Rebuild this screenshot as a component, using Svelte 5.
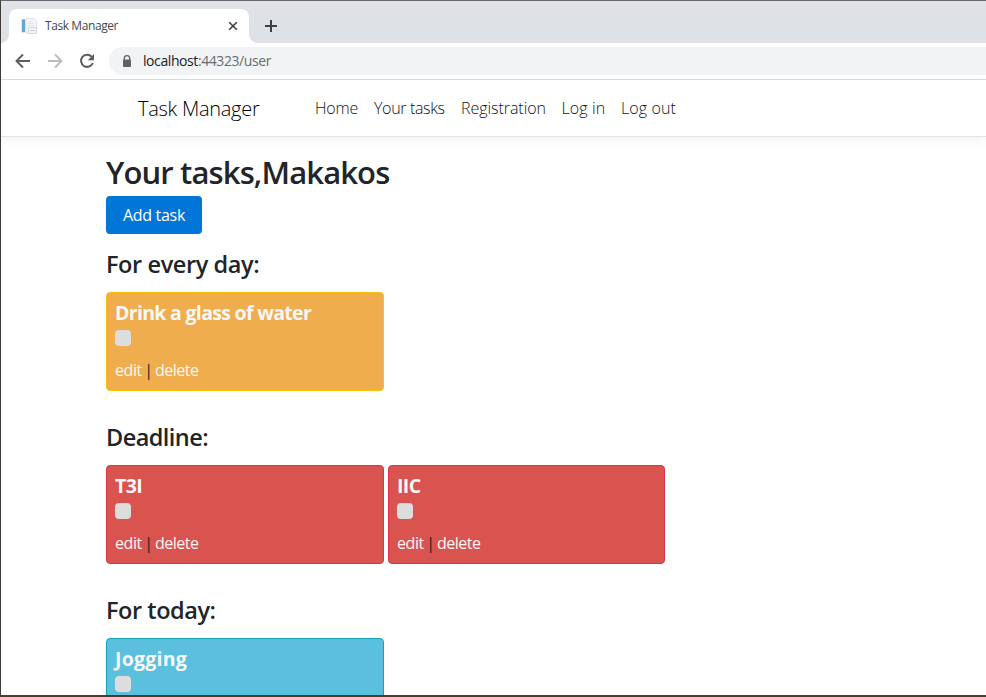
<script>
  const links = [
    { label: 'Home', cls: 'home' },
    { label: 'Your tasks', cls: 'tasks' },
    { label: 'Registration', cls: 'registration' },
    { label: 'Log in', cls: 'login' },
    { label: 'Log out', cls: 'logout' }
  ];
  const sections = [
    { title: 'For every day:', cls: 'daily', kind: 'warning', actions: true, tasks: ['Drink a glass of water'] },
    { title: 'Deadline:', cls: 'deadline', kind: 'danger', actions: true, tasks: ['T3I', 'IIC'] },
    { title: 'For today:', cls: 'today', kind: 'info', actions: false, tasks: ['Jogging'] }
  ];
</script>

<div class="window">
  <div class="strip">
    <div class="tab">
      <svg class="favicon" width="16" height="16" viewBox="0 0 16 16">
        <rect x="0" y="1" width="12" height="14" fill="#e3e9ee" />
        <rect x="1" y="1.500" width="3" height="12.500" fill="#62a8d4" />
        <path d="M5 .5h8l2.500 2.500v12H5z" fill="#f6f7f8" stroke="#e0e3e6" />
        <path d="M7 3.500h4M7 5.500h6M7 7.500h6" stroke="#dfe2e6" />
        <path d="M7.500 9.500h8v6h-8z" fill="#f3f4f8" stroke="#d3d5de" />
        <path d="M9 12.500h5" stroke="#c8ced8" />
      </svg>
      <span class="tab-title">Task Manager</span>
      <svg class="close" width="10" height="10" viewBox="0 0 10 10"><path d="M1.200 1.200l7.600 7.600M8.800 1.200l-7.600 7.600" stroke="#3c4043" stroke-width="1.600" /></svg>
    </div>
    <svg class="plus" width="12" height="12" viewBox="0 0 12 12"><path d="M6 0v12M0 6h12" stroke="#3c4043" stroke-width="2" /></svg>
  </div>

  <div class="toolbar">
    <svg width="24" height="24" viewBox="0 0 24 24" fill="none" stroke="#5a5d61" stroke-width="1.900"><path d="M19 12H6M12 5.500L5.500 12l6.500 6.500" /></svg>
    <svg width="24" height="24" viewBox="0 0 24 24" fill="none" stroke="#babcbe" stroke-width="1.900"><path d="M5 12h13M12 5.500l6.500 6.500-6.500 6.500" /></svg>
    <svg width="24" height="24" viewBox="0 0 24 24"><path d="M16.600 7.600A6.100 6.100 0 1 0 17.800 14" fill="none" stroke="#5a5d61" stroke-width="2" /><path d="M19 5v6.200h-6.200z" fill="#5a5d61" /></svg>
    <div class="address">
      <svg width="10" height="13" viewBox="0 0 10 13"><path d="M2.300 5V3.400a2.700 2.700 0 0 1 5.400 0V5" fill="none" stroke="#5f6368" stroke-width="1.300" /><rect x="1" y="4.500" width="8" height="7.500" rx=".9" fill="#5f6368" /></svg>
      <span class="url"><b>localhost</b>:44323/user</span>
    </div>
  </div>

  <nav>
    <span class="brand">Task Manager</span>
    {#each links as link}
      <span class="link {link.cls}">{link.label}</span>
    {/each}
  </nav>

  <main>
    <h1>Your tasks,Makakos</h1>
    <button>Add task</button>
    {#each sections as section}
      <section>
        <h3 class={section.cls}>{section.title}</h3>
        <div class="cards">
          {#each section.tasks as task}
            <article class={section.kind}>
              <h5>{task}</h5>
              <span class="check"></span>
              {#if section.actions}
                <p><span class="edit">edit</span><i>|</i><span class="delete">delete</span></p>
              {/if}
            </article>
          {/each}
        </div>
      </section>
    {/each}
  </main>
</div>

<style>
  :global(body) {
    margin: 0;
    overflow: hidden;
  }
  .window {
    box-sizing: border-box;
    width: 986px;
    height: 697px;
    overflow: hidden;
    display: flex;
    flex-direction: column;
    background: #fff;
    border-top: 1px solid #69696c;
    border-left: 1px solid #3f3b38;
    border-bottom: 2px solid #45402a;
    font-family: 'Open Sans', 'Noto Sans', sans-serif;
    color: #212529;
    white-space: nowrap;
  }
  .strip {
    flex: none;
    height: 42px;
    background: #dee1e6;
    display: flex;
    align-items: flex-end;
  }
  .tab {
    position: relative;
    box-sizing: border-box;
    width: 240px;
    height: 34px;
    margin-left: 8px;
    padding: 0 11px 0 12px;
    border-radius: 8px 8px 0 0;
    background: #fff;
    display: flex;
    align-items: center;
  }
  .tab::before,
  .tab::after {
    content: '';
    position: absolute;
    bottom: 0;
    width: 8px;
    height: 8px;
  }
  .tab::before {
    left: -8px;
    background: radial-gradient(circle at 0 0, #dee1e6 7.500px, #fff 8px);
  }
  .tab::after {
    right: -8px;
    background: radial-gradient(circle at 100% 0, #dee1e6 7.500px, #fff 8px);
  }
  .tab-title {
    margin-left: 8px;
    padding-bottom: 1px;
    font-size: 12px;
    letter-spacing: -0.420px;
    color: #45494d;
    flex: 1;
  }
  .plus {
    margin: 0 0 11px 16px;
  }
  .toolbar {
    flex: none;
    height: 36px;
    padding-left: 10px;
    border-bottom: 1px solid #dadce0;
    display: flex;
    align-items: center;
    gap: 8px;
  }
  .address {
    flex: 1;
    height: 28px;
    margin-left: 2px;
    padding-left: 13px;
    border-radius: 14px 0 0 14px;
    background: #f1f3f4;
    display: flex;
    align-items: center;
    gap: 11px;
  }
  .url {
    padding-bottom: 1px;
    font-size: 14px;
    letter-spacing: -0.420px;
    color: #676b70;
  }
  .url b {
    font-weight: 400;
    color: #202124;
  }
  nav {
    flex: none;
    box-sizing: border-box;
    height: 57px;
    padding-left: 137px;
    border-bottom: 1px solid #dee2e6;
    box-shadow: 0 4px 12px rgba(0, 0, 0, 0.050);
    display: flex;
    align-items: center;
    font-weight: 300;
    font-size: 16px;
  }
  .brand {
    width: 177px;
    padding-top: 1px;
    font-size: 20px;
    letter-spacing: -0.270px;
    color: #000;
  }
  .link {
    color: #0e1114;
  }
  .home {
    width: 59px;
    letter-spacing: -0.200px;
  }
  .tasks {
    width: 87px;
    letter-spacing: -0.350px;
  }
  .registration {
    width: 100.500px;
    letter-spacing: -0.050px;
  }
  .login {
    width: 59.500px;
    letter-spacing: 0.100px;
  }
  .logout {
    letter-spacing: 0.100px;
  }
  main {
    padding: 16px 0 0 105px;
    display: flex;
    flex-direction: column;
    align-items: flex-start;
  }
  h1 {
    margin: 0 0 5px;
    height: 38px;
    font-size: 31px;
    line-height: 38px;
    font-weight: 600;
    letter-spacing: -0.870px;
  }
  button {
    flex: none;
    width: 96px;
    height: 38px;
    margin-bottom: 16px;
    padding: 0;
    border: 0;
    border-radius: 4px;
    background: #0275d8;
    color: #fff;
    font: 400 16px 'Open Sans', 'Noto Sans', sans-serif;
    letter-spacing: -0.300px;
  }
  section {
    height: 173px;
    flex: none;
  }
  h3 {
    margin: 0 0 8px;
    height: 34px;
    line-height: 28px;
    font-size: 23.500px;
    font-weight: 600;
    letter-spacing: -0.550px;
  }
  .daily {
    letter-spacing: -0.400px;
  }
  .today {
    letter-spacing: -0.450px;
  }
  .cards {
    display: flex;
    gap: 4px;
  }
  article {
    box-sizing: border-box;
    width: 278px;
    height: 99px;
    padding: 8px;
    border: 1px solid;
    border-radius: 4px;
    color: #f7f7f7;
  }
  article + article {
    width: 277px;
  }
  .warning {
    background: #f0ad4e;
    border-color: #ffc107;
  }
  .danger {
    background: #d9534f;
    border-color: #dc3545;
  }
  .info {
    background: #5bc0de;
    border-color: #17a2b8;
  }
  h5 {
    margin: 0;
    height: 29px;
    font-size: 19.500px;
    line-height: 24px;
    font-weight: 700;
    letter-spacing: -0.690px;
  }
  .danger h5 {
    letter-spacing: -0.600px;
  }
  .info h5 {
    letter-spacing: 0.250px;
  }
  .check {
    display: block;
    width: 16px;
    height: 16px;
    border-radius: 4px;
    background: #ddd;
  }
  p {
    display: flex;
    margin: 12px 0 0;
    font-size: 16px;
    line-height: 24px;
    letter-spacing: -0.400px;
  }
  .delete {
    letter-spacing: -0.500px;
  }
  p i {
    width: 13px;
    text-align: center;
    font-style: normal;
    color: #212529;
  }
</style>
